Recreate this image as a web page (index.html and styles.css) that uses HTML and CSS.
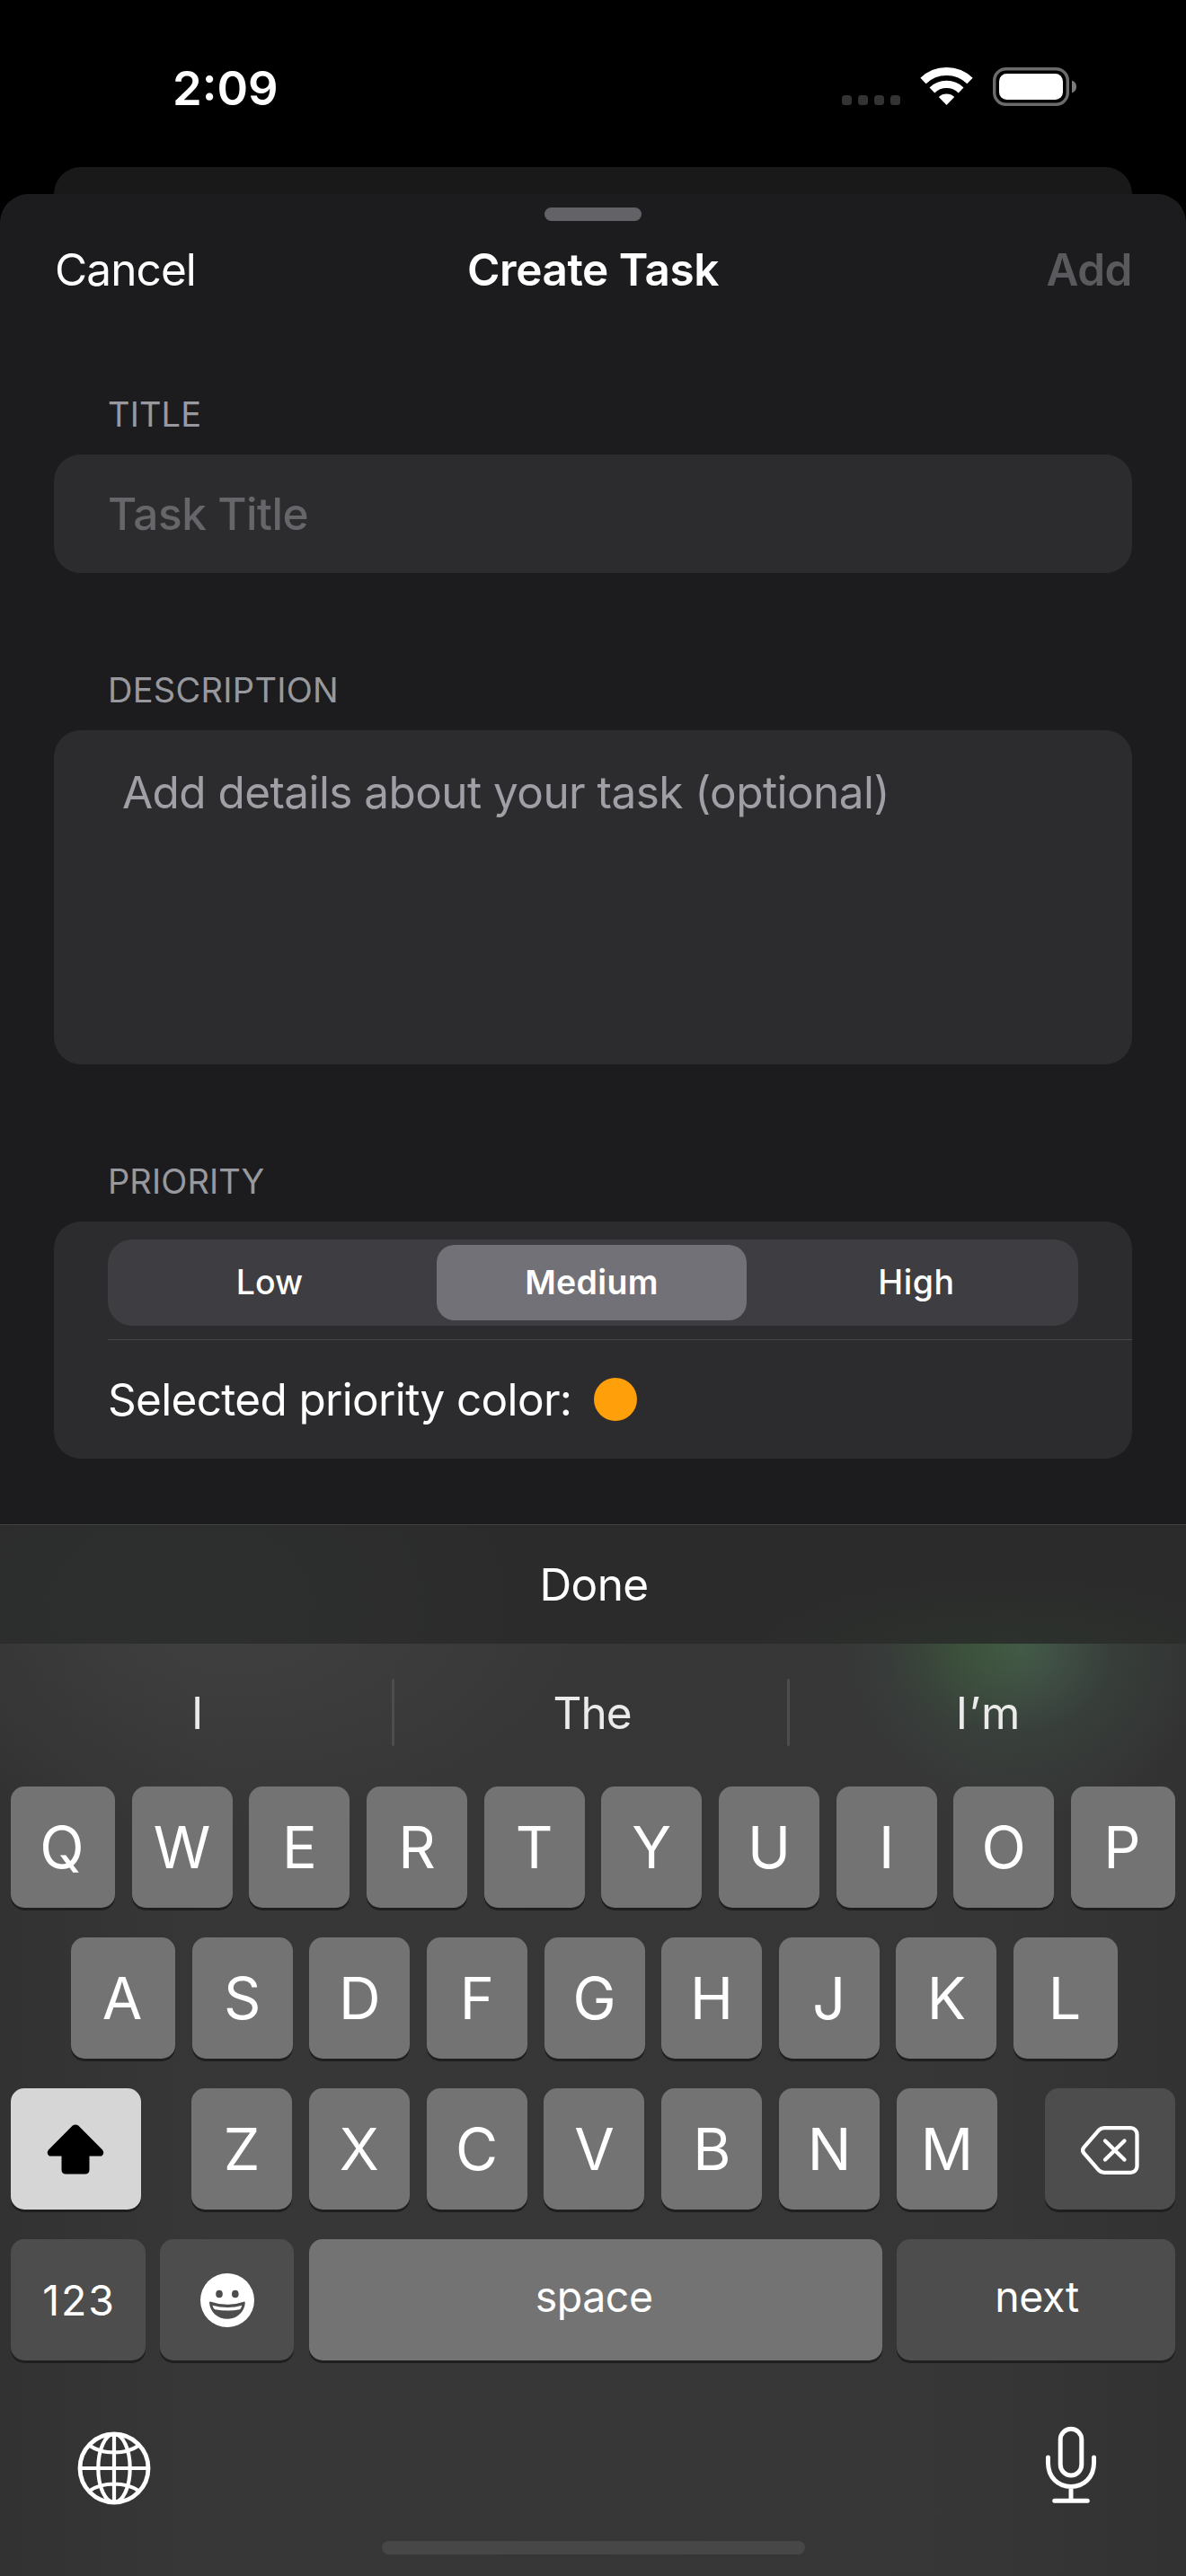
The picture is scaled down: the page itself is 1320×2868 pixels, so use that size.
FILE: index.html
```html
<!DOCTYPE html>
<html lang="en">
<head>
<meta charset="utf-8">
<title>Create Task</title>
<link rel="stylesheet" href="styles.css">
</head>
<body>
<div class="screen">
  <div class="status-bar">
    <span class="time">2:09</span>
    <svg class="status-icons" viewBox="936 74 264 48" width="264" height="48">
      <g fill="#333">
        <rect x="937" y="106" width="11" height="11" rx="3.5"/>
        <rect x="955" y="106" width="11" height="11" rx="3.5"/>
        <rect x="973" y="106" width="11" height="11" rx="3.5"/>
        <rect x="991" y="106" width="11" height="11" rx="3.5"/>
      </g>
      <g transform="translate(1053.5 117)">
        <path d="M-26 -27A37.5 37.5 0 0 1 26 -27" fill="none" stroke="#fff" stroke-width="9"/>
        <path d="M-16.1 -16.6A23.2 23.2 0 0 1 16.1 -16.6" fill="none" stroke="#fff" stroke-width="8.4"/>
        <path d="M0 0L-8.7 -9A12.8 12.8 0 0 1 8.7 -9Z" fill="#fff"/>
      </g>
      <rect x="1106.7" y="76.7" width="81.6" height="39.6" rx="13" fill="none" stroke="#6b6b6b" stroke-width="3.4"/>
      <rect x="1112" y="82" width="71" height="29" rx="8.5" fill="#fff"/>
      <path d="M1193 89.5q5 2 5 7t-5 7z" fill="#7c7c7c"/>
    </svg>
  </div>
  <div class="back-card"></div>
  <main class="sheet">
    <div class="grabber"></div>
    <header class="nav">
      <span class="cancel">Cancel</span>
      <h1 class="title">Create Task</h1>
      <span class="add">Add</span>
    </header>
    <section class="group">
      <h2 class="label">TITLE</h2>
      <div class="card title-field">Task Title</div>
    </section>
    <section class="group">
      <h2 class="label wide">DESCRIPTION</h2>
      <div class="card description-field">Add details about your task (optional)</div>
    </section>
    <section class="group">
      <h2 class="label">PRIORITY</h2>
      <div class="card priority">
        <div class="segments">
          <span class="segment">Low</span>
          <span class="segment selected">Medium</span>
          <span class="segment high">High</span>
        </div>
        <div class="priority-row"><span>Selected priority color:</span><i class="dot"></i></div>
      </div>
    </section>
  </main>
  <div class="toolbar">Done</div>
  <div class="keyboard">
    <div class="suggestions">
      <span class="suggestion">I</span>
      <span class="suggestion the">The</span>
      <span class="suggestion im">I’m</span>
    </div>
    <div class="rows">
      <div class="row">
        <span class="key edge">Q</span><span class="key">W</span><span class="key">E</span><span class="key">R</span><span class="key">T</span><span class="key">Y</span><span class="key">U</span><span class="key">I</span><span class="key">O</span><span class="key edge">P</span>
      </div>
      <div class="row second">
        <span class="key edge">A</span><span class="key">S</span><span class="key">D</span><span class="key">F</span><span class="key">G</span><span class="key">H</span><span class="key">J</span><span class="key">K</span><span class="key edge">L</span>
      </div>
      <div class="row">
        <span class="key shift">
          <svg viewBox="0 0 64 56" width="64" height="56"><path d="M28.8 1.6Q32 -.8 35.2 1.6L62 28.5Q65 32.5 61 35.6H47.5V50.5Q47.5 55.5 42.5 55.5H21.5Q16.5 55.5 16.5 50.5V35.6H3Q-1 32.5 2 28.5Z" fill="#000"/></svg>
        </span>
        <div class="letters">
          <span class="key">Z</span><span class="key">X</span><span class="key">C</span><span class="key">V</span><span class="key">B</span><span class="key">N</span><span class="key">M</span>
        </div>
        <span class="key dark delete">
          <svg viewBox="0 0 65 54" width="65" height="54" fill="none" stroke="#fff" stroke-width="4.3" stroke-linecap="round" stroke-linejoin="round"><path d="M26 2.2H55.5a7 7 0 0 1 7 7V44.8a7 7 0 0 1-7 7H26q-3.5 0-6-2.4L3.500 30.300q-2.800-3.300 0-6.600L20 4.600q2.500-2.400 6-2.400z"/><path d="M27 16.500L48.500 37.500M48.500 16.500L27 37.500"/></svg>
        </span>
      </div>
      <div class="row last">
        <span class="key dark numbers">123</span>
        <span class="key dark emoji">
          <svg viewBox="0 0 60 60" width="60" height="60"><circle cx="30" cy="30" r="30" fill="#fff"/><g fill="#4d4d4d"><ellipse cx="21" cy="23" rx="3.8" ry="4.3"/><ellipse cx="38.8" cy="23" rx="3.8" ry="4.3"/><path d="M10 33q0-1.800 2-1.300Q30 38 48 31.700q1.800-.5 1.800 1.300C49 43 41 50.800 30 50.800S11 43 10 33z"/></g><path d="M13.500 35.700Q30 40.500 46.300 35.700Q45.500 39 43.800 40.200Q30 43 16.200 40.200Q14.300 39 13.500 35.700z" fill="#fff"/></svg>
        </span>
        <span class="key space">space</span>
        <span class="key dark next">next</span>
      </div>
    </div>
    <div class="bottom-bar">
      <svg class="globe" viewBox="0 0 84 84" width="84" height="84" fill="none" stroke="#fff"><circle cx="42" cy="42" r="38" stroke-width="4.8"/><g stroke-width="4.2"><ellipse cx="42" cy="42" rx="17.7" ry="38"/><path d="M42 4V80M4 42H80M15 17Q26 24.500 42 24.500T69 17M15 67Q26 59.500 42 59.500T69 67"/></g></svg>
      <svg class="mic" viewBox="0 0 60 88" width="60" height="88" fill="none" stroke="#fff" stroke-width="5" stroke-linecap="round"><rect x="18.2" y="3.2" width="23.6" height="51.7" rx="11.8"/><path d="M4.500 35v6c0 16 11 26.500 25.500 26.500S55.500 57 55.500 41v-6M30 68v15.300M11.700 83.300H48.300"/></svg>
    </div>
    <div class="home-indicator"></div>
  </div>
</div>
</body>
</html>
```
FILE: styles.css
```css
* { box-sizing: border-box; }
body {
  margin: 0;
  background: #000;
  color: #fff;
  font-family: Inter, "Liberation Sans", sans-serif;
  font-size: 49.5px;
  line-height: 60px;
}
svg { display: block; flex: none; }
.screen { width: 1320px; height: 2868px; display: flex; flex-direction: column; overflow: hidden; }

.status-bar {
  height: 186px;
  padding: 10px 120px 0 192px;
  display: flex;
  align-items: center;
  justify-content: space-between;
}
.time { font-size: 52.5px; font-weight: 600; }
.back-card { height: 30px; margin: 0 60px; border-radius: 30px 30px 0 0; background: #191919; }

.sheet {
  height: 1481px;
  padding-top: 15px;
  border-radius: 32px 32px 0 0;
  background: #1c1c1e;
}
.grabber { width: 108px; height: 15px; margin: 0 auto; border-radius: 8px; background: #636367; }
.nav {
  height: 108px;
  padding: 0 60px;
  display: grid;
  grid-template-columns: 1fr auto 1fr;
  align-items: center;
}
.cancel { padding-left: 1px; letter-spacing: -0.9px; }
.title { margin: 0; font-size: inherit; font-weight: 600; letter-spacing: -0.45px; }
.add { font-weight: 600; letter-spacing: -0.5px; text-align: right; color: #5a5a5e; }

.group { margin: 0 60px; padding-top: 105px; }
.nav + .group { padding-top: 82px; }
.label {
  margin: 0 0 20px;
  padding-left: 60px;
  font-size: 38px;
  font-weight: 400;
  line-height: 50px;
  letter-spacing: 0.1px;
  color: #98989f;
}
.label.wide { letter-spacing: 0.3px; }
.card { border-radius: 30px; background: #2c2c2e; }
.title-field {
  height: 132px;
  padding: 36px 60px;
  font-weight: 500;
  letter-spacing: -0.44px;
  color: #65656a;
}
.description-field {
  height: 372px;
  padding: 39px 76px;
  letter-spacing: -0.57px;
  color: #a09fa6;
}
.priority { height: 264px; padding-top: 20px; }
.segments {
  height: 96px;
  margin: 0 60px 15px;
  display: grid;
  grid-template-columns: repeat(3, 1fr);
  border-radius: 27px;
  background: #3e3d42;
  font-size: 37.5px;
  font-weight: 500;
}
.segment { display: flex; align-items: center; justify-content: center; }
.segment.selected {
  margin: 6px 9px 6px 6px;
  border-radius: 20px;
  background: #727177;
  font-weight: 600;
  letter-spacing: 0.3px;
}
.segment.high { letter-spacing: 0.6px; }
.priority-row {
  height: 133px;
  margin-left: 60px;
  border-top: 1px solid #464649;
  display: flex;
  align-items: center;
  gap: 25px;
  letter-spacing: -0.68px;
}
.dot { width: 48px; height: 48px; border-radius: 50%; background: #ff9f0a; }

.toolbar {
  height: 133px;
  border-top: 1px solid #414141;
  display: flex;
  align-items: center;
  justify-content: center;
  padding-left: 2px;
  letter-spacing: -0.6px;
  background:
    radial-gradient(300px 90px at 1120px 145px, #2c322d, transparent),
    radial-gradient(420px 300px at 200px 90px, #2d2f2e, transparent),
    #2b2b2b;
}

.keyboard {
  flex: 1;
  background:
    radial-gradient(100px 110px at 1085px -10px, rgba(58, 92, 48, 0.45), transparent),
    radial-gradient(210px 190px at 1135px 5px, rgba(74, 102, 84, 0.75), rgba(62, 82, 70, 0.35) 50%, transparent),
    radial-gradient(440px 230px at 260px -20px, #3f3f3f, transparent),
    linear-gradient(90deg, #323232, #373737 18%, #363636 82%, #323232);
}
.suggestions { height: 153px; display: flex; margin-bottom: 6px; color: #ebebeb; }
.suggestion {
  position: relative;
  flex: 1;
  display: flex;
  align-items: center;
  justify-content: center;
}
.suggestion:not(:last-child)::after {
  content: "";
  position: absolute;
  right: 0;
  top: 39px;
  width: 3px;
  height: 75px;
  border-radius: 2px;
  background: #4d4d4d;
}
.the { letter-spacing: -1px; }
.im { padding-left: 2px; letter-spacing: 1.6px; }

.rows { display: flex; flex-direction: column; gap: 33px; padding: 0 12px; }
.row { display: flex; justify-content: space-between; height: 135px; }
.row.second { padding: 0 64px 0 67px; }
.letters { display: flex; justify-content: space-between; width: 897px; margin-left: 3px; }
.key {
  width: 112px;
  height: 135px;
  display: flex;
  align-items: center;
  justify-content: center;
  border-radius: 15px;
  background: #737373;
  box-shadow: 0 3px 0 #1f1f1f;
  font-size: 64.6px;
}
.key.edge { width: 116px; padding-right: 2px; }
.key.dark { background: #4d4d4d; }
.key.shift { width: 145px; padding-right: 2px; background: #d6d6d6; }
.key.delete { width: 145px; padding-top: 3px; }
.last .key { font-size: 46.5px; }
.last .numbers { width: 150px; padding-left: 2px; letter-spacing: 1.8px; }
.last .emoji { width: 149px; }
.last .space { width: 638px; padding: 0 3px 7px 0; letter-spacing: -0.5px; }
.last .next { width: 310px; padding: 0 0 7px 2px; letter-spacing: -0.4px; }

.bottom-bar {
  height: 161px;
  padding: 73px 98px 0 85px;
  display: flex;
  justify-content: space-between;
}
.globe { margin-top: 5px; }
.home-indicator { width: 471px; height: 15px; margin: 40px auto 0; border-radius: 8px; background: #474747; }
```
